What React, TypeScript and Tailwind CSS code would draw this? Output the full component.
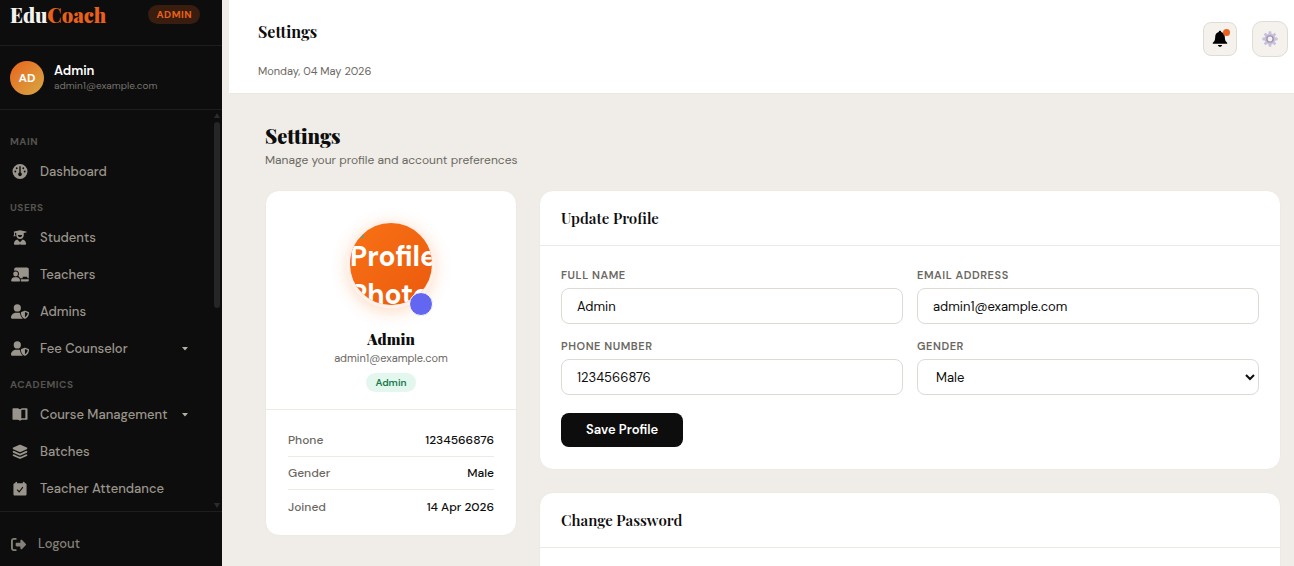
import { useState } from 'react';
import type { ReactNode } from 'react';
import { FaGauge, FaUserShield, FaRightFromBracket } from 'react-icons/fa6';
import clsx from 'clsx';

function StudentIcon({ className }: { className?: string }) {
  return (
    <svg viewBox="0 0 16 16" className={className} fill="currentColor" aria-hidden="true">
      <path d="M8 .2l6.600 1.500c.5.100.5.900 0 1L12 3.300v2.200c0 2.200-1.800 4-4 4s-4-1.800-4-4V3.300l-1.300-.3v1.600l.7 2.100H1l.7-2.100V2.700c-.500-.1-.5-.9 0-1zM5.700 5.300c0 1.300 1 2.300 2.300 2.300s2.300-1 2.300-2.300z" />
      <path d="M5.200 10L8 13l2.800-3c2.100.5 3.700 2.400 3.700 4.700 0 .6-.4 1-1 1H8.600L8 14.600l-.6 1.100H2.500c-.6 0-1-.4-1-1 0-2.300 1.600-4.200 3.700-4.700z" />
    </svg>
  );
}

function TeacherIcon({ className }: { className?: string }) {
  return (
    <svg viewBox="0 0 18 15" className={className} fill="currentColor" aria-hidden="true">
      <path d="M5 .5h11c1 0 1.800.8 1.800 1.800v9h-1.500V9.800h-4.600v1.500H9.200C8.900 10.300 8.200 9.500 7.300 9c.4-.6.7-1.200.7-2 0-1.900-1.500-3.400-3.400-3.400-.5 0-1 .1-1.400.3V2.300C3.200 1.300 4 .5 5 .5z" />
      <path d="M9.800 12.300h8v1.200c0 .5-.4.900-.9.900H9.800z" />
      <circle cx="4.600" cy="7" r="2.400" />
      <path d="M3.400 10.200h2.400c1.800 0 3.200 1.400 3.200 3.200v.3c0 .4-.3.700-.7.700H.9c-.4 0-.7-.3-.7-.7v-.3c0-1.800 1.400-3.200 3.200-3.200z" />
    </svg>
  );
}

function CourseIcon({ className }: { className?: string }) {
  return (
    <svg viewBox="0 0 16 16" className={className} fill="currentColor" aria-hidden="true">
      <path d="M0 2.200C0 1.600.5 1.200 1 1.200h3.600C6 1.200 7.200 1.700 8 2.500v12.300c-.9-.8-2-1.100-3.400-1.100H1c-.6 0-1-.4-1-1z" />
      <path
        fillRule="evenodd"
        d="M8 2.500c.8-.8 2-1.300 3.400-1.300H15c.6 0 1 .4 1 1v10.500c0 .6-.4 1-1 1h-3.600c-1.400 0-2.500.3-3.400 1.100zm1.400.9v8.900c.6-.2 1.200-.3 1.900-.3h2.400V2.900h-2.200c-.8 0-1.500.1-2.100.5z"
      />
    </svg>
  );
}

function BatchesIcon({ className }: { className?: string }) {
  return (
    <svg viewBox="0 0 16 16" className={className} fill="currentColor" aria-hidden="true">
      <path d="M7.500.8c.3-.1.700-.1 1 0l6.700 3c.8.400.8 1.300 0 1.700l-6.700 3c-.3.100-.7.100-1 0l-6.700-3c-.8-.4-.8-1.300 0-1.700z" />
      <path d="M1.300 7.300L7 9.900c.6.300 1.400.3 2 0l5.700-2.600.500.200c.8.400.8 1.300 0 1.700l-6.700 3c-.3.100-.7.100-1 0l-6.700-3c-.8-.4-.8-1.300 0-1.700z" />
      <path d="M1.300 10.900L7 13.500c.6.300 1.400.3 2 0l5.700-2.600.500.200c.8.400.8 1.300 0 1.700l-6.700 3c-.3.100-.7.100-1 0l-6.700-3c-.8-.4-.8-1.300 0-1.700z" />
    </svg>
  );
}

function AttendanceIcon({ className }: { className?: string }) {
  return (
    <svg viewBox="0 0 16 16" className={className} aria-hidden="true">
      <path
        fill="currentColor"
        d="M4 .8c.6 0 1 .4 1 1v.7h6v-.7c0-.6.400-1 1-1s1 .4 1 1v.7h.6c.8 0 1.400.6 1.400 1.400V14c0 .8-.6 1.400-1.400 1.400H2.400C1.600 15.400 1 14.800 1 14V3.900c0-.8.6-1.400 1.400-1.400H3v-.7c0-.6.4-1 1-1z"
      />
      <path d="M4.900 9.200l2.200 2.400 4-5" fill="none" stroke="#0d0d0d" strokeWidth="1.100" />
    </svg>
  );
}

function BellIcon() {
  return (
    <svg viewBox="0 0 16 18" className="h-[18px] w-4" fill="#000" aria-hidden="true">
      <path d="M8 .8c.7 0 1.200.5 1.200 1.100C11.700 2.500 12.800 4.500 12.800 7c0 3.200.9 4.600 2.400 5.800v1H.8v-1C2.300 11.600 3.200 10.200 3.200 7c0-2.500 1.100-4.500 3.600-5.100C6.800 1.300 7.300.8 8 .8z" />
      <path d="M5.900 15h4.200c-.2 1.100-1 1.800-2.100 1.800S6.100 16.100 5.900 15z" />
    </svg>
  );
}

function GearIcon() {
  const teeth = [0, 45, 90, 135, 180, 225, 270, 315];
  return (
    <svg viewBox="0 0 16 16" className="h-4 w-4" aria-hidden="true">
      <g fill="#c9c0dc">
        {teeth.map((angle) => (
          <rect key={angle} x="6.600" y="0.300" width="2.800" height="4" rx="0.800" transform={`rotate(${angle} 8 8)`} />
        ))}
        <circle cx="8" cy="8" r="5.500" />
      </g>
      <circle cx="8" cy="8" r="3.100" fill="#f5f2ee" stroke="#a096b0" strokeWidth="1.400" />
    </svg>
  );
}

const navGroups = [
  {
    label: 'Main',
    items: [{ icon: FaGauge, label: 'Dashboard' }],
  },
  {
    label: 'Users',
    items: [
      { icon: StudentIcon, label: 'Students' },
      { icon: TeacherIcon, label: 'Teachers', wide: true },
      { icon: FaUserShield, label: 'Admins', wide: true },
      { icon: FaUserShield, label: 'Fee Counselor', wide: true, menu: true },
    ],
  },
  {
    label: 'Academics',
    items: [
      { icon: CourseIcon, label: 'Course Management', menu: true },
      { icon: BatchesIcon, label: 'Batches' },
      { icon: AttendanceIcon, label: 'Teacher Attendance' },
    ],
  },
];

const details = [
  { label: 'Phone', value: '1234566876' },
  { label: 'Gender', value: 'Male' },
  { label: 'Joined', value: '14 Apr 2026' },
];

const serif = "font-['Playfair_Display','Liberation_Serif',serif]";
const fieldClass =
  'h-9 w-full rounded-lg border border-[#dedad2] bg-white text-[13px] text-[#0d0d0d] outline-none focus:border-[#e8611a]';

function Sidebar() {
  return (
    <aside className="flex h-full w-[222px] shrink-0 flex-col bg-[#0d0d0d]">
      {/* Brand */}
      <div className="flex h-[46px] shrink-0 items-start justify-between border-b border-[#1e1e1e] pl-[10px] pr-[22px] pt-[3px]">
        <div className={clsx(serif, 'text-[20px] font-black leading-6 text-[#f5f2ee]')}>
          Edu<span className="text-[#e8611a]">Coach</span>
        </div>
        <span className="mt-[2px] rounded-full bg-[#391d0f] px-2 text-[10px] font-bold leading-[19px] tracking-wider text-[#e8611a]">
          ADMIN
        </span>
      </div>

      {/* Signed-in user */}
      <div className="flex h-16 shrink-0 items-center gap-[10px] border-b border-[#1e1e1e] px-[10px]">
        <div className="flex h-[34px] w-[34px] items-center justify-center rounded-full bg-linear-135 from-[#e8611a] to-[#d4a843] text-xs font-bold text-white">
          AD
        </div>
        <div>
          <p className="text-[13px] font-semibold leading-4 text-white">Admin</p>
          <p className="text-[10px] leading-[14px] text-[#76736d]">admin1@example.com</p>
        </div>
      </div>

      <div className="flex min-h-0 flex-1">
        <nav className="min-w-0 flex-1 overflow-hidden pt-[14px]">
          {navGroups.map((group) => (
            <div key={group.label}>
              <p className="flex h-[29px] items-end pb-1 pl-[10px] text-[10px] font-bold uppercase leading-[14px] tracking-wider text-[#55534f]">
                {group.label}
              </p>
              {group.items.map((item) => (
                <a
                  key={item.label}
                  href="#"
                  className="flex h-[37px] items-center gap-[10px] pl-[10px] pr-[26px] text-[13px] font-medium text-[#9a958c] hover:text-white"
                >
                  <span className="flex w-5 shrink-0 justify-center">
                    <item.icon className={'wide' in item ? 'h-[15px] w-[18px]' : 'h-[15px] w-4'} />
                  </span>
                  <span className="flex-1 whitespace-nowrap">{item.label}</span>
                  {'menu' in item && (
                    <svg viewBox="0 0 6 4" className="h-1 w-[6px] shrink-0" fill="#b5b0a6" aria-hidden="true">
                      <path d="M0 0h6L3 3.500z" />
                    </svg>
                  )}
                </a>
              ))}
            </div>
          ))}
        </nav>
        {/* Scroll track */}
        <div className="flex w-2 shrink-0 flex-col items-start gap-1 pt-[3px] pb-[3px]" aria-hidden="true">
          <svg viewBox="0 0 6 5" className="h-[5px] w-[6px]" fill="#2c2c2c"><path d="M3 0l3 5H0z" /></svg>
          <div className="h-[186px] w-[6px] rounded-full bg-[#262626]" />
          <svg viewBox="0 0 6 5" className="mt-auto h-[5px] w-[6px]" fill="#2c2c2c"><path d="M0 0h6L3 5z" /></svg>
        </div>
      </div>

      <div className="h-[55px] shrink-0 border-t border-[#1e1e1e] pl-[11px] pt-[22px]">
        <a href="#" className="flex items-center gap-3 text-[13px] font-medium leading-5 text-[#85817a]">
          <FaRightFromBracket className="h-[15px] w-[15px]" />
          Logout
        </a>
      </div>
    </aside>
  );
}

function Topbar() {
  return (
    <header className="flex h-[94px] shrink-0 items-start justify-between border-b border-[#ebe7e1] bg-white pl-[29px] pr-[6px]">
      <div className="pt-5">
        <p className={clsx(serif, 'text-base font-bold leading-6 text-[#0d0d0d]')}>Settings</p>
        <p className="mt-[19px] text-[11px] leading-4 text-[#6b6862]">Monday, 04 May 2026</p>
      </div>
      <div className="flex items-center gap-[15px] pt-[21px]">
        <button
          aria-label="Notifications"
          className="relative flex h-[34px] w-[34px] items-center justify-center rounded-lg border border-[#e0dcd5] bg-[#f5f2ee]"
        >
          <BellIcon />
          <span className="absolute right-[6px] top-[6px] h-[7px] w-[7px] rounded-full bg-[#e8611a]" />
        </button>
        <button
          aria-label="Settings"
          className="flex h-9 w-9 items-center justify-center rounded-[10px] border border-[#e0dcd5] bg-[#f5f2ee]"
        >
          <GearIcon />
        </button>
      </div>
    </header>
  );
}

function ProfileCard() {
  return (
    <section className="rounded-[14px] border border-[#edeae4] bg-white">
      <div className="flex flex-col items-center border-b border-[#edeae4] pb-[17px] pt-[29px]">
        <div className="relative">
          <div className="h-[88px] w-[88px] overflow-hidden rounded-full border-3 border-[#fff1ea] bg-linear-135 from-[#f97316] to-[#ea580c] bg-origin-border pt-[15px] text-[28px] font-bold leading-[38px] text-white shadow-[0_4px_16px_rgba(249,115,22,0.25)]">
            <span className="block">Profile</span>
            <span className="block">Photo</span>
          </div>
          <svg viewBox="0 0 4 4" className="absolute left-[13px] top-[14px] h-1 w-1" aria-hidden="true">
            <path d="M4 0v4H0z" fill="#6f9a76" />
          </svg>
          <button
            aria-label="Change photo"
            className="absolute -bottom-2 right-[2px] h-6 w-6 rounded-full border border-white bg-[#6366f1]"
          />
        </div>
        <h2 className={clsx(serif, 'mt-5 text-[15px] font-black leading-[22px] text-[#0d0d0d]')}>Admin</h2>
        <p className="text-[11px] leading-4 text-[#6b6862]">admin1@example.com</p>
        <span className="mt-[7px] rounded-full bg-[#e3f7ee] px-[9px] text-[10px] font-semibold leading-[19px] text-[#1a7a4e]">
          Admin
        </span>
      </div>
      <dl className="px-[22px] pb-3 pt-[14px] text-xs font-medium">
        {details.map((row) => (
          <div
            key={row.label}
            className="flex h-[33px] items-center justify-between border-b border-[#edeae4] last:border-b-0"
          >
            <dt className="text-[#6b6862]">{row.label}</dt>
            <dd className="text-[#0d0d0d]">{row.value}</dd>
          </div>
        ))}
      </dl>
    </section>
  );
}

function Panel({ title, children }: { title: string; children?: ReactNode }) {
  return (
    <section className="rounded-[14px] border border-[#edeae4] bg-white">
      <h2 className={clsx(serif, 'flex h-[55px] items-center border-b border-[#edeae4] px-[21px] text-[15px] font-semibold text-[#0d0d0d]')}>
        {title}
      </h2>
      <div className="px-[21px] pb-[22px] pt-[21px]">{children}</div>
    </section>
  );
}

function Field({ id, label, children }: { id: string; label: string; children: ReactNode }) {
  return (
    <div>
      <label htmlFor={id} className="mb-[5px] block text-[11px] font-semibold uppercase leading-4 tracking-wider text-[#6b6862]">
        {label}
      </label>
      {children}
    </div>
  );
}

export default function App() {
  const [form, setForm] = useState({
    name: 'Admin',
    email: 'admin1@example.com',
    phone: '1234566876',
    gender: 'Male',
  });

  const update = (key: string, value: string) => setForm({ ...form, [key]: value });

  return (
    <div className="flex h-screen overflow-hidden bg-[#f0ede8] font-['DM_Sans',Inter,sans-serif]">
      <Sidebar />
      <div className="flex min-w-0 flex-1 flex-col pl-[7px]">
        <Topbar />
        <main className="min-h-0 flex-1 overflow-y-auto pb-9 pl-9 pr-[13px] pt-[29px] [scrollbar-width:none]">
          <h1 className={clsx(serif, 'text-[20px] font-black leading-[26px] text-[#0d0d0d]')}>Settings</h1>
          <p className="text-xs leading-[22px] text-[#6b6862]">Manage your profile and account preferences</p>

          <div className="mt-[19px] grid grid-cols-[252px_1fr] items-start gap-[22px]">
            <ProfileCard />
            <div className="flex flex-col gap-[22px]">
              <Panel title="Update Profile">
                <form onSubmit={(e) => e.preventDefault()}>
                  <div className="grid grid-cols-2 gap-[14px]">
                    <Field id="name" label="Full Name">
                      <input
                        id="name"
                        className={clsx(fieldClass, 'px-[15px]')}
                        value={form.name}
                        onChange={(e) => update('name', e.target.value)}
                      />
                    </Field>
                    <Field id="email" label="Email Address">
                      <input
                        id="email"
                        type="email"
                        className={clsx(fieldClass, 'px-[15px]')}
                        value={form.email}
                        onChange={(e) => update('email', e.target.value)}
                      />
                    </Field>
                    <Field id="phone" label="Phone Number">
                      <input
                        id="phone"
                        className={clsx(fieldClass, 'px-[15px]')}
                        value={form.phone}
                        onChange={(e) => update('phone', e.target.value)}
                      />
                    </Field>
                    <Field id="gender" label="Gender">
                      <select
                        id="gender"
                        className={clsx(fieldClass, 'pl-[14px]')}
                        value={form.gender}
                        onChange={(e) => update('gender', e.target.value)}
                      >
                        <option>Male</option>
                        <option>Female</option>
                        <option>Other</option>
                      </select>
                    </Field>
                  </div>
                  <button className="mt-[18px] h-[34px] rounded-lg bg-[#0d0d0d] px-[25px] text-[13px] font-semibold text-white">
                    Save Profile
                  </button>
                </form>
              </Panel>
              <Panel title="Change Password" />
            </div>
          </div>
        </main>
      </div>
    </div>
  );
}
